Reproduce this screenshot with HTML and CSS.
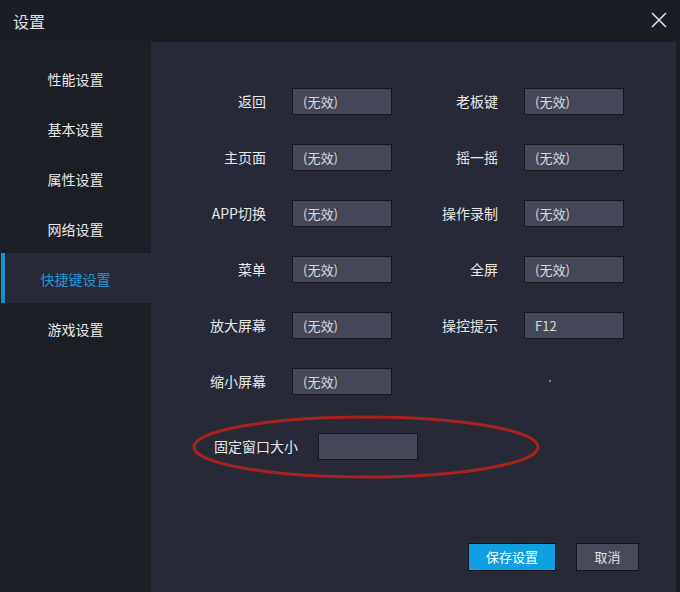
FILE: index.html
```html
<!DOCTYPE html>
<html lang="zh-CN">
<head>
<meta charset="utf-8">
<title>设置</title>
<link rel="stylesheet" href="styles.css">
</head>
<body>
<div class="window">
  <header class="titlebar">
    <span class="title">设置</span>
    <svg class="close" width="16" height="16" viewBox="0 0 16 16">
      <path d="M1 1 L15 15 M15 1 L1 15" stroke="#dcdcdc" stroke-width="1.6" fill="none"/>
    </svg>
  </header>
  <div class="main">
    <nav class="sidebar">
      <div class="nav-item">性能设置</div>
      <div class="nav-item">基本设置</div>
      <div class="nav-item">属性设置</div>
      <div class="nav-item">网络设置</div>
      <div class="nav-item active">快捷键设置</div>
      <div class="nav-item">游戏设置</div>
    </nav>
    <section class="content">
      <div class="grid">
        <label class="lbl">返回</label><div class="field">(无效)</div>
        <label class="lbl">老板键</label><div class="field">(无效)</div>
        <label class="lbl">主页面</label><div class="field">(无效)</div>
        <label class="lbl">摇一摇</label><div class="field">(无效)</div>
        <label class="lbl">APP切换</label><div class="field">(无效)</div>
        <label class="lbl">操作录制</label><div class="field">(无效)</div>
        <label class="lbl">菜单</label><div class="field">(无效)</div>
        <label class="lbl">全屏</label><div class="field">(无效)</div>
        <label class="lbl">放大屏幕</label><div class="field">(无效)</div>
        <label class="lbl">操控提示</label><div class="field">F12</div>
        <label class="lbl">缩小屏幕</label><div class="field">(无效)</div>
        <span></span><span class="dotcell"><span class="dot"></span></span>
      </div>
      <div class="fixed-row">
        <label class="lbl fixed-lbl">固定窗口大小</label>
        <div class="field empty"></div>
        <svg class="ring" width="350" height="66" viewBox="0 0 350 66">
          <ellipse cx="175" cy="33" rx="172" ry="30" fill="none" stroke="#a8201c" stroke-width="3"/>
        </svg>
      </div>
      <div class="actions">
        <button class="btn primary">保存设置</button>
        <button class="btn">取消</button>
      </div>
    </section>
  </div>
</div>
</body>
</html>
```

FILE: styles.css
```css
* { box-sizing: border-box; }
html, body {
  margin: 0;
  padding: 0;
  background: #1b1d25;
}
body {
  font-family: "Noto Sans CJK SC", "Noto Sans", sans-serif;
  color: #e4e4e4;
}
.window {
  width: 680px;
  height: 592px;
  display: flex;
  flex-direction: column;
  background: #1b1d25;
}
.titlebar {
  height: 42px;
  flex: none;
  display: flex;
  align-items: center;
  justify-content: space-between;
  padding: 0 13px 0 13px;
}
.title {
  font-size: 16px;
  color: #e0e0e0;
  line-height: 1;
  margin-top: -1px;
}
.close {
  display: block;
  margin-top: -2px;
}
.main {
  flex: 1;
  display: flex;
  min-height: 0;
}
.sidebar {
  width: 151px;
  flex: none;
  background: #1c1e26;
  padding-top: 11px;
}
.nav-item {
  height: 50px;
  display: flex;
  align-items: center;
  justify-content: center;
  font-size: 14px;
  color: #e8e8e8;
  padding-top: 2px;
}
.nav-item.active {
  background: #272936;
  color: #1b98d5;
  border-left: 4px solid #1591d0;
  margin-left: 1px;
  padding-right: 5px;
}
.content {
  flex: 1;
  background: #272936;
  margin-right: 4px;
  display: flex;
  flex-direction: column;
  padding: 46px 37px 21px 48px;
}
.grid {
  display: grid;
  grid-template-columns: 67px 100px 80px 100px;
  grid-auto-rows: 27px;
  column-gap: 26px;
  row-gap: 29px;
  align-items: center;
}
.lbl {
  font-size: 14px;
  color: #e8e8e8;
  text-align: right;
  white-space: nowrap;
  line-height: 27px;
}
.field {
  height: 27px;
  width: 100px;
  background: #454757;
  border: 1px solid #15171e;
  font-size: 13px;
  color: #dadada;
  line-height: 25px;
  padding-left: 10px;
  font-family: "Noto Sans CJK SC", "Liberation Sans", sans-serif;
}
.dotcell {
  display: block;
  height: 27px;
  position: relative;
}
.dot {
  position: absolute;
  left: 25px;
  top: 12px;
  width: 2px;
  height: 2px;
  background: #7a7c88;
}
.fixed-row {
  position: relative;
  display: flex;
  align-items: center;
  margin-top: 38px;
  margin-left: 15px;
  gap: 20px;
}
.fixed-lbl {
  text-align: left;
}
.field.empty {
  width: 100px;
}
.ring {
  position: absolute;
  left: -23px;
  top: -19px;
  pointer-events: none;
}
.actions {
  margin-top: auto;
  display: flex;
  justify-content: flex-end;
  gap: 20px;
}
.btn {
  height: 28px;
  width: 63px;
  font-family: "Noto Sans CJK SC", sans-serif;
  font-size: 13px;
  color: #e2e2e2;
  background: #474959;
  border: 1px solid #14161c;
  padding: 0;
  line-height: 26px;
}
.btn.primary {
  width: 88px;
  background: #0fa0e2;
  color: #ffffff;
}
```
